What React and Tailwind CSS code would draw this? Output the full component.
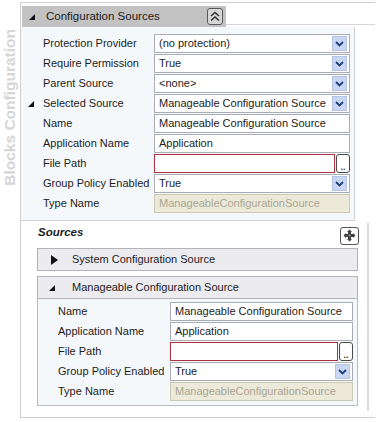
import React from "react";

const Tri = () => (
  <svg width="6" height="6" viewBox="0 0 6 6" className="shrink-0">
    <polygon points="6,0 6,6 0,6" fill="#111" />
  </svg>
);

const TriRight = () => (
  <svg width="7" height="10" viewBox="0 0 7 10" className="shrink-0">
    <polygon points="0,0 7,5 0,10" fill="#111" />
  </svg>
);

const Chev = () => (
  <span className="w-[15px] h-[15px] mr-[2px] shrink-0 bg-[#c9d7f3] border border-[#b3c4e6] flex items-center justify-center">
    <svg width="9" height="6" viewBox="0 0 9 6">
      <path d="M1 1 L4.5 4.5 L8 1" fill="none" stroke="#1e3f7e" strokeWidth="1.8" />
    </svg>
  </span>
);

function Field({ type, value }) {
  if (type === "select") {
    return (
      <div className="h-[19px] w-full border border-[#a9aeb6] bg-white flex items-center justify-between pl-[4px]">
        <span className="whitespace-nowrap overflow-hidden">{value}</span>
        <Chev />
      </div>
    );
  }
  if (type === "file") {
    return (
      <div className="h-[19px] w-full flex">
        <div className="flex-1 h-full border border-[#b0303e] bg-white" />
        <div className="w-[14px] h-full ml-[1px] border border-[#4a4a4a] rounded-[3px] bg-white flex items-end justify-center text-[9px] leading-[10px] font-bold text-[#333]">
          ..
        </div>
      </div>
    );
  }
  if (type === "disabled") {
    return (
      <div className="h-[19px] w-full border border-[#cbc8b6] bg-[#ece9d9] text-[#aaa592] flex items-center pl-[4px]">
        <span className="whitespace-nowrap overflow-hidden">{value}</span>
      </div>
    );
  }
  return (
    <div className="h-[19px] w-full border border-[#a9aeb6] bg-white flex items-center pl-[4px]">
      <span className="whitespace-nowrap overflow-hidden">{value}</span>
    </div>
  );
}

const configRows = [
  { label: "Protection Provider", type: "select", value: "(no protection)" },
  { label: "Require Permission", type: "select", value: "True" },
  { label: "Parent Source", type: "select", value: "<none>" },
  { label: "Selected Source", type: "select", value: "Manageable Configuration Source", tri: true },
  { label: "Name", type: "text", value: "Manageable Configuration Source" },
  { label: "Application Name", type: "text", value: "Application" },
  { label: "File Path", type: "file" },
  { label: "Group Policy Enabled", type: "select", value: "True" },
  { label: "Type Name", type: "disabled", value: "ManageableConfigurationSource" },
];

const sourceRows = [
  { label: "Name", type: "text", value: "Manageable Configuration Source" },
  { label: "Application Name", type: "text", value: "Application" },
  { label: "File Path", type: "file" },
  { label: "Group Policy Enabled", type: "select", value: "True" },
  { label: "Type Name", type: "disabled", value: "ManageableConfigurationSource" },
];

export default function App() {
  return (
    <div className="w-[390px] h-[422px] bg-white flex overflow-hidden font-['Liberation_Sans',Arial,sans-serif] text-[11px] text-[#1c1c1c]">
      {/* vertical title */}
      <div className="w-[20px] shrink-0 flex items-start justify-center pt-[29px]">
        <span className="[writing-mode:vertical-rl] rotate-180 font-bold text-[15.5px] leading-none text-[#d6d6d6] whitespace-nowrap">
          Blocks Configuration
        </span>
      </div>

      {/* main */}
      <div className="w-[355px] mt-[2px] h-[416px] border-t border-l border-b border-[#cfcfcf] flex flex-col">
        {/* header */}
        <div className="flex items-end h-[24px]">
          <div className="ml-[1px] w-[204px] h-[21px] bg-[#c2c2c2] flex items-center pl-[7px] pr-[3px]">
            <Tri />
            <span className="ml-[11px] text-[11.5px]">Configuration Sources</span>
            <div className="ml-auto w-[16px] h-[17px] border border-[#5a5a5a] rounded-[3px] bg-[#d6d6d6] flex items-center justify-center">
              <svg width="10" height="11" viewBox="0 0 10 11">
                <path d="M1 5 L5 1.5 L9 5" fill="none" stroke="#333" strokeWidth="1.5" />
                <path d="M1 9.5 L5 6 L9 9.5" fill="none" stroke="#333" strokeWidth="1.5" />
              </svg>
            </div>
          </div>
          <div className="flex-1 border-b border-[#d6d6d6] mb-[2px]" />
        </div>

        {/* config panel */}
        <div className="w-[334px] border-r border-b border-[#cfd3d8] bg-[#f5f8fb] pt-[7px] pb-[6px] flex flex-col">
          {configRows.map((r) => (
            <div key={r.label} className="h-[20px] grid grid-cols-[133px_196px]">
              <div className="flex items-center pl-[7px]">
                <span className="w-[15px] flex">{r.tri ? <Tri /> : null}</span>
                <span className="whitespace-nowrap -mt-[2px]">{r.label}</span>
              </div>
              <Field type={r.type} value={r.value} />
            </div>
          ))}
        </div>

        {/* sources area */}
        <div className="flex flex-1">
          <div className="w-[340px] pl-[16px] flex flex-col">
            <div className="h-[27px] flex items-center justify-between pr-[2px] pt-[1px]">
              <span className="font-bold italic text-[11.5px] ml-[1px] -mt-[4px]">Sources</span>
              <div className="w-[19px] h-[18px] border border-[#555] rounded-[3px] bg-white flex items-center justify-center mt-[1px]">
                <svg width="13" height="13" viewBox="0 0 13 13">
                  <path d="M6.5 0.5 L9 3 H4 Z" fill="#444" />
                  <path d="M6.5 12.5 L9 10 H4 Z" fill="#444" />
                  <path d="M0.5 6.5 L3 4 V9 Z" fill="#444" />
                  <path d="M12.5 6.5 L10 4 V9 Z" fill="#444" />
                  <rect x="5" y="3" width="3" height="7" fill="#444" />
                  <rect x="3" y="5" width="7" height="3" fill="#444" />
                  <circle cx="6.5" cy="6.5" r="1.1" fill="#9a9a9a" />
                </svg>
              </div>
            </div>

            <div className="w-[321px] h-[23px] border border-[#b3b3b8] bg-[#ecebf0] flex items-center pl-[13px]">
              <TriRight />
              <span className="ml-[14px]">System Configuration Source</span>
            </div>

            <div className="w-[321px] h-[23px] mt-[5px] border border-[#b3b3b8] bg-[#ecebf0] flex items-center pl-[11px]">
              <Tri />
              <span className="ml-[17px]">Manageable Configuration Source</span>
            </div>

            <div className="w-[321px] border-l border-r border-b border-[#b9bdc4] bg-[#f5f8fb] pt-[3px] pb-[3px] flex flex-col">
              {sourceRows.map((r) => (
                <div key={r.label} className="h-[20px] grid grid-cols-[132px_183px]">
                  <div className="flex items-center pl-[20px]">
                    <span className="whitespace-nowrap -mt-[2px]">{r.label}</span>
                  </div>
                  <Field type={r.type} value={r.value} />
                </div>
              ))}
            </div>
          </div>
          <div className="ml-[6px] mt-[2px] mb-[6px] w-[2px] bg-[#dcdcdc]" />
        </div>
      </div>
    </div>
  );
}
